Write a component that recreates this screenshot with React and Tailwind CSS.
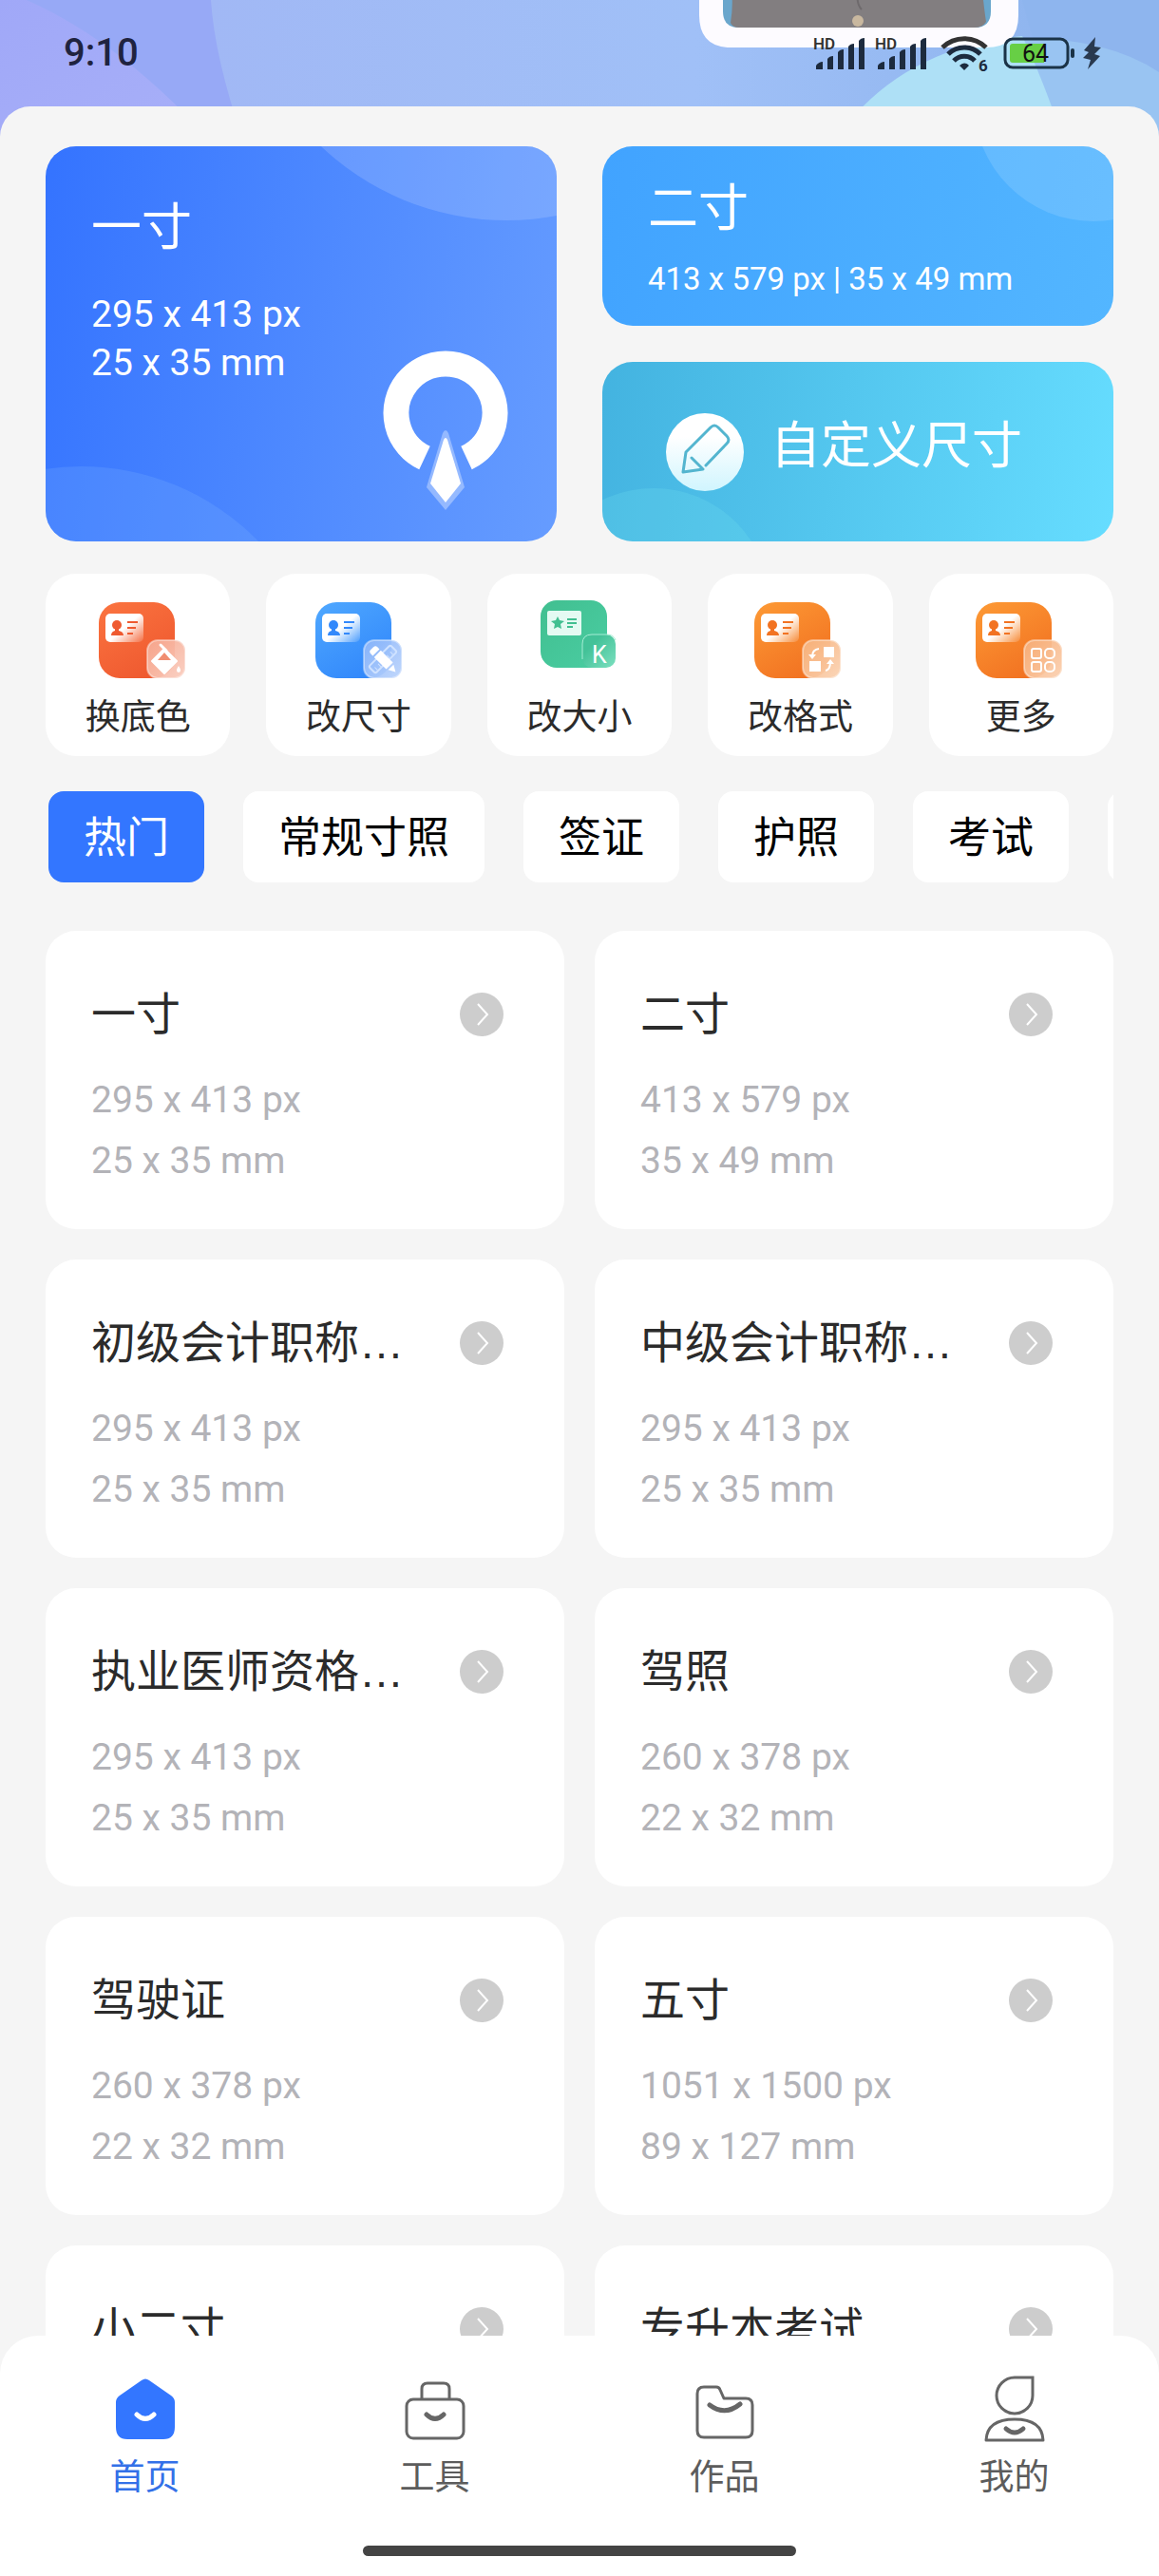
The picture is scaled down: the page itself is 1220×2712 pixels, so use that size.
import React, { useState } from "react";

const tabs = ["热门", "常规寸照", "签证", "护照", "考试"];

const sizes = [
  { name: "一寸", px: "295 x 413 px", mm: "25 x 35 mm" },
  { name: "二寸", px: "413 x 579 px", mm: "35 x 49 mm" },
  { name: "初级会计职称…", px: "295 x 413 px", mm: "25 x 35 mm" },
  { name: "中级会计职称…", px: "295 x 413 px", mm: "25 x 35 mm" },
  { name: "执业医师资格…", px: "295 x 413 px", mm: "25 x 35 mm" },
  { name: "驾照", px: "260 x 378 px", mm: "22 x 32 mm" },
  { name: "驾驶证", px: "260 x 378 px", mm: "22 x 32 mm" },
  { name: "五寸", px: "1051 x 1500 px", mm: "89 x 127 mm" },
  { name: "小二寸", px: "", mm: "" },
  { name: "专升本考试", px: "", mm: "" },
];

/* Status bar */

function Signal() {
  return (
    <svg width="54" height="36" viewBox="0 0 54 36" fill="#1d2b3e" overflow="visible">
      <text x="0" y="14" fontSize="17" fontWeight="600" fontFamily="Roboto, sans-serif" fill="#333">
        HD
      </text>
      <path d="M3 35V31q3-4 7-4v8z" />
      <path d="M15 35V24q2-3 6-3v14z" />
      <path d="M26 35V17q2-3 6-3v21z" />
      <path d="M37 35V11q2-3 6-3v27z" />
      <path d="M48 35V5q2-3 6-3v33z" />
    </svg>
  );
}

function Wifi() {
  return (
    <svg width="50" height="38" viewBox="0 0 50 38" fill="none" stroke="#1d2b3e" strokeWidth="5" overflow="visible">
      <path d="M2 13a33 33 0 0 1 46 0" stroke="#333" />
      <path d="M8 20a24 24 0 0 1 34 0" />
      <path d="M14 27a15 15 0 0 1 22 0" />
      <path d="M20 32q5-5 10 0l-5 5z" fill="#1d2b3e" stroke="none" />
      <text x="40" y="38" fontSize="17" fontWeight="700" fontFamily="Roboto, sans-serif" fill="#1d2b3e" stroke="none">
        6
      </text>
    </svg>
  );
}

function Battery() {
  return (
    <svg width="76" height="36" viewBox="0 0 76 36" fill="none">
      <rect x="2" y="3" width="66" height="30" rx="8" stroke="#1b3347" strokeWidth="3" />
      <path d="M10 8h33v20H10a3 3 0 0 1-3-3V11a3 3 0 0 1 3-3z" fill="#67cf45" />
      <rect x="71" y="13" width="4" height="10" rx="2" fill="#1b3347" />
      <text x="34" y="27" textAnchor="middle" fontSize="25" fontFamily="Roboto, sans-serif" fill="#111">
        64
      </text>
    </svg>
  );
}

function Bolt() {
  return (
    <svg width="20" height="36" viewBox="0 0 20 36" fill="#29394f">
      <path d="M13 1 1 15l5 2-6 6 8 2-3 10L18 21l-6-2 7-7-7-1z" />
    </svg>
  );
}

function HeaderArt() {
  return (
    <svg
      className="absolute inset-x-0 top-0 h-40 w-full"
      viewBox="0 0 1220 160"
      preserveAspectRatio="xMidYMin slice"
    >
      <defs>
        <linearGradient id="sky" x1="0" x2="1">
          <stop offset="0.18" stopColor="#a1b8f5" />
          <stop offset="0.6" stopColor="#a0c0f7" />
          <stop offset="1" stopColor="#8ab2ec" />
        </linearGradient>
        <linearGradient id="violet" x1="0" x2="1" y2="1">
          <stop offset="0" stopColor="#a0a8f8" />
          <stop offset="1" stopColor="#a8b0f8" />
        </linearGradient>
      </defs>
      <rect width="1220" height="160" fill="url(#sky)" />
      <path d="M0 0h222q4 64 38 160H0z" fill="#97a9f6" />
      <path d="M0 0h28q104 46 204 160H0z" fill="url(#violet)" />
      <path d="M1076 0h144v160h-100z" fill="#8eb5ee" />
      <path d="M1076 40q90 0 144 36v84h-144z" fill="#99c4f2" />
      <path d="M870 160q70-110 206-122 20 40 48 122z" fill="#aee0f6" />
      <path d="M736-30h336v46q0 34-34 34H770q-34 0-34-34z" fill="#fdfbff" />
      <path d="M761-10h282v22q0 17-17 17H778q-17 0-17-17z" fill="#6aa6cc" />
      <path d="M770-10h264q2 20 4 33-4 6-12 6H778q-7 0-9-5 3-18 1-34z" fill="#827e80" />
      <path d="M903-10q-2 14 4 20" stroke="#6e6a6c" strokeWidth="2" fill="none" />
      <circle cx="903" cy="22" r="6" fill="#c9b89f" />
    </svg>
  );
}

/* Tool icons */

function IdCard({ color, from, to, id, x, children }) {
  return (
    <svg width="96" height="84" viewBox="0 0 96 84" overflow="visible">
      <defs>
        <linearGradient id={id + "-bg"} x1="0" y1="0" x2="0.6" y2="1">
          <stop offset="0" stopColor={from} />
          <stop offset="1" stopColor={to} />
        </linearGradient>
        <linearGradient id={id + "-card"} x1="0.2" y1="0.2" x2="1" y2="0.9">
          <stop offset="0.4" stopColor="#fff" />
          <stop offset="1" stopColor="#fff" stopOpacity="0.15" />
        </linearGradient>
        <linearGradient id={id + "-badge"} x1="0" y1="0" x2="1" y2="1">
          <stop offset="0" stopColor={color} />
          <stop offset="1" stopColor="#fff" />
        </linearGradient>
      </defs>
      <g transform={"translate(" + x + " 2)"}>
        <rect width="80" height="80" rx="22" fill={"url(#" + id + "-bg)"} />
        <rect x="7" y="12" width="40" height="30" rx="5" fill={"url(#" + id + "-card)"} />
        <g fill={to}>
          <circle cx="19" cy="24" r="5" />
          <path d="M17 27h4v3q5 1 5 5H13q0-4 4-5z" />
          <path d="M30 20h11v2H30zM30 26h9v2h-9zM30 32h6v2h-6z" />
        </g>
        <rect x="51" y="40" width="40" height="40" rx="11" fill={color} fillOpacity="0.9" />
        <rect x="51" y="40" width="40" height="40" rx="11" fill={"url(#" + id + "-badge)"} fillOpacity="0.4" stroke="#fff" strokeOpacity="0.4" strokeWidth="2" />
        {children}
      </g>
    </svg>
  );
}

function BackgroundIcon() {
  return (
    <IdCard id="bgcolor" x={7} color="#f6a890" from="#fb7440" to="#ef5a30">
      <path d="M65 45 71 51" stroke="#fff" strokeWidth="3" strokeLinecap="round" />
      <path d="M69 49 82 62 69 75 56 62z" fill="#fff" stroke="#fff" strokeWidth="2" strokeLinejoin="round" />
      <path d="M69 53 76 61H62z" fill="#f08d70" />
      <path d="M84 67q4 6 0 7-4-1 0-7z" fill="#fff" />
    </IdCard>
  );
}

function ResizeIcon() {
  return (
    <IdCard id="resize" x={2} color="#8bb5fa" from="#4fa8ff" to="#3389fb">
      <g transform="rotate(45 71 60)">
        <rect x="66" y="44" width="10" height="32" rx="2" fill="none" stroke="#cfe2ff" strokeWidth="2" />
        <path d="M71 49h4M71 54h4M71 67h4M71 72h4" stroke="#cfe2ff" strokeWidth="1" />
      </g>
      <g transform="rotate(-45 71 60)">
        <path d="M66 47q0-3 3-3h4q3 0 3 3v3H66zM66 52h10v18H66zM67 72h8l-4 7z" fill="#fff" />
      </g>
    </IdCard>
  );
}

function FileSizeIcon() {
  return (
    <svg width="96" height="84" viewBox="0 0 96 84">
      <defs>
        <linearGradient id="size-bg" x1="0" y1="0" x2="1" y2="1">
          <stop offset="0" stopColor="#41bf90" />
          <stop offset="1" stopColor="#4acda2" />
        </linearGradient>
        <linearGradient id="size-badge" x1="0" y1="0" x2="1" y2="1">
          <stop offset="0.3" stopColor="#43c298" />
          <stop offset="1" stopColor="#7de0c0" />
        </linearGradient>
      </defs>
      <g transform="translate(7 0)">
        <rect width="70" height="71" rx="17" fill="url(#size-bg)" />
        <rect x="7" y="11" width="36" height="26" rx="2" fill="#e4faf2" />
        <path d="m18 17 2 4 5 1-4 3 1 5-4-2-4 2 1-5-4-3 5-1z" fill="#41bf90" />
        <path d="M28 20h10M28 24h10M28 28h6" stroke="#41bf90" strokeWidth="2" />
        <rect x="44" y="36" width="35" height="35" rx="10" fill="url(#size-badge)" />
        <path d="M44 62V46q0-10 10-10h16q7 0 9 6" fill="none" stroke="#a5ecd4" strokeWidth="1" />
        <text x="54" y="66" fontSize="25" fontFamily="Roboto, sans-serif" fill="#fff">
          K
        </text>
      </g>
    </svg>
  );
}

function FormatIcon() {
  return (
    <IdCard id="format" x={0} color="#f7b27c" from="#fd9a35" to="#f27322">
      <path d="M73 47h11v11H73zM58 62h12v11H58z" fill="#fff" />
      <path d="M68 49q-7 1-7 8M75 72q5-1 5-9" fill="none" stroke="#fff" strokeWidth="2" />
      <path d="M57 55h8l-4 5zM76 65h8l-4-5z" fill="#fff" />
    </IdCard>
  );
}

function MoreIcon() {
  return (
    <IdCard id="more" x={0} color="#f7ae78" from="#fd9a35" to="#f27322">
      <g fill="none" stroke="#fff" strokeWidth="2">
        <rect x="59" y="49" width="10" height="10" rx="2" />
        <rect x="73" y="49" width="10" height="10" rx="4" />
        <rect x="59" y="63" width="10" height="10" rx="2" />
        <rect x="73" y="63" width="10" height="10" rx="4" />
      </g>
    </IdCard>
  );
}

const tools = [
  { label: "换底色", icon: <BackgroundIcon /> },
  { label: "改尺寸", icon: <ResizeIcon /> },
  { label: "改大小", icon: <FileSizeIcon /> },
  { label: "改格式", icon: <FormatIcon /> },
  { label: "更多", icon: <MoreIcon /> },
];

/* Bottom navigation icons */

const navItems = [
  {
    label: "首页",
    icon: (
      <svg width="72" height="72" viewBox="0 0 72 72" fill="none">
        <path d="M32 7q4-3 8 0l23 16q4 3 4 7v26q0 13-12 13H17Q5 69 5 56V30q0-4 4-7z" fill="#3376ff" />
        <path d="M27 43q9 9 18 0" stroke="#fff" strokeWidth="5" strokeLinecap="round" />
      </svg>
    ),
  },
  {
    label: "工具",
    icon: (
      <svg width="72" height="72" viewBox="0 0 72 72" fill="none" stroke="#666" strokeWidth="3">
        <rect x="6" y="27" width="60" height="41" rx="7" />
        <path d="M22 27V16q0-6 6-6h17q6 0 6 6v11" />
        <path d="M27 43q9 9 18 0" strokeWidth="5" strokeLinecap="round" />
      </svg>
    ),
  },
  {
    label: "作品",
    icon: (
      <svg width="72" height="72" viewBox="0 0 72 72" fill="none" stroke="#666" strokeWidth="3">
        <path d="M7 21q0-7 7-7h13q3 0 4 3l4 9h23q7 0 7 7v27q0 7-7 7H14q-7 0-7-7z" strokeLinejoin="round" />
        <path d="M20 33q16 12 32-1" strokeWidth="5" strokeLinecap="round" />
      </svg>
    ),
  },
  {
    label: "我的",
    icon: (
      <svg width="72" height="72" viewBox="0 0 72 72" fill="none" stroke="#666" strokeWidth="3">
        <path d="M36 4h19v19a19 19 0 1 1-19-19z" />
        <path d="M6 70q1-22 30-22t30 22z" strokeLinejoin="round" />
        <path d="M27 58q9 8 18 0" strokeWidth="5" strokeLinecap="round" />
      </svg>
    ),
  },
];

function SizeCard({ name, px, mm }) {
  return (
    <a href="#" className="block rounded-[32px] bg-white pt-[58px] pr-16 pb-10 pl-12">
      <div className="mb-7 flex items-center justify-between">
        <h3 className="font-['Liberation_Sans','Noto_Sans_CJK_SC',sans-serif] text-[47px] leading-[60px] whitespace-nowrap text-[#2b2b2b]">
          {name}
        </h3>
        <svg className="shrink-0" width="46" height="46" viewBox="0 0 46 46" fill="none">
          <circle cx="23" cy="23" r="23" fill="#cdcdcd" />
          <path d="m19 12 10 11-10 11" stroke="#fff" strokeWidth="2" />
        </svg>
      </div>
      <p className="min-h-16 text-[39px] leading-[64px] text-[#b3b3b8]">{px}</p>
      <p className="min-h-16 text-[39px] leading-[64px] text-[#b3b3b8]">{mm}</p>
    </a>
  );
}

export default function App() {
  const [tab, setTab] = useState("热门");

  return (
    <div className="relative flex h-screen flex-col overflow-hidden bg-[#f5f5f5] font-[Roboto,'Noto_Sans_CJK_SC',sans-serif]">
      <HeaderArt />

      <header className="relative flex h-28 shrink-0 items-center justify-between pr-[60px] pl-[67px]">
        <span className="text-[40px] leading-[48px] font-medium text-[#1f2340]">9:10</span>
        <div className="flex items-center">
          <Signal />
          <span className="w-[11px]" />
          <Signal />
          <span className="w-[15px]" />
          <Wifi />
          <span className="w-4" />
          <Battery />
          <span className="w-2" />
          <Bolt />
        </div>
      </header>

      <main className="relative min-h-0 flex-1 overflow-y-auto rounded-t-[32px] bg-[#f5f5f5] px-12 pt-[42px] [scrollbar-width:none]">
        {/* Featured sizes */}
        <section className="grid grid-cols-2 gap-x-12 gap-y-[38px] text-white">
          <a href="#" className="relative row-span-2 overflow-hidden rounded-[32px] bg-linear-100 from-[#3473ff] to-[#669cff] px-12 pt-14">
            <svg
              className="absolute inset-0 h-full w-full"
              viewBox="0 0 538 416"
              preserveAspectRatio="xMaxYMid slice"
              fill="none"
            >
              <circle cx="485" cy="-205" r="283" fill="#fff" fillOpacity="0.15" />
              <circle cx="37" cy="598" r="261" fill="#7fb4ff" fillOpacity="0.22" />
              <path d="M399 328A52 52 0 1 1 443 328" stroke="#fff" strokeWidth="27" />
              <path d="M418 302q3-6 6 0l17 57-20 24-20-24z" fill="#fff" fillOpacity="0.35" />
              <path d="M419 309q2-4 4 0l14 46-16 20-16-20z" fill="#fff" />
            </svg>
            <div className="relative">
              <h2 className="mb-9 text-[53px] leading-[60px]">一寸</h2>
              <p className="text-[39px] leading-[51px]">295 x 413 px</p>
              <p className="text-[39px] leading-[51px]">25 x 35 mm</p>
            </div>
          </a>

          <a href="#" className="relative h-[189px] overflow-hidden rounded-[32px] bg-linear-100 from-[#41a3ff] to-[#53b6ff] px-12 pt-9">
            <svg className="absolute inset-0 h-full w-full" viewBox="0 0 538 189" preserveAspectRatio="xMaxYMid slice">
              <circle cx="517" cy="-47" r="126" fill="#fff" fillOpacity="0.13" />
            </svg>
            <div className="relative">
              <h2 className="mb-6 text-[53px] leading-[60px]">二寸</h2>
              <p className="text-[33px] leading-10 whitespace-nowrap">413 x 579 px | 35 x 49 mm</p>
            </div>
          </a>

          <a href="#" className="relative flex h-[189px] items-center overflow-hidden rounded-[32px] bg-linear-100 from-[#43b3e0] to-[#66ddff] px-[67px]">
            <svg className="absolute inset-0 h-full w-full" viewBox="0 0 538 189" preserveAspectRatio="xMinYMid slice">
              <circle cx="54" cy="256" r="123" fill="#6fe0ee" fillOpacity="0.25" />
            </svg>
            <div className="relative flex items-center gap-7">
              <svg width="82" height="82" viewBox="0 0 82 82" fill="none">
                <defs>
                  <linearGradient id="pencil" x1="0" y1="0" x2="0" y2="1">
                    <stop offset="0.3" stopColor="#fff" />
                    <stop offset="1" stopColor="#d0f5fe" />
                  </linearGradient>
                </defs>
                <circle cx="41" cy="41" r="41" fill="url(#pencil)" />
                <path
                  d="M27 47l12 12-21 3 3-21 26-26q4-4 8 0l9 9q4 4 0 8L42 55"
                  stroke="#53b5cf"
                  strokeWidth="3"
                  strokeLinecap="round"
                  strokeLinejoin="round"
                />
              </svg>
              <h2 className="pb-3 text-[53px] leading-[60px] whitespace-nowrap">自定义尺寸</h2>
            </div>
          </a>
        </section>

        {/* Tools */}
        <section className="mt-[34px] grid grid-cols-5 gap-[38px]">
          {tools.map((tool) => (
            <button
              key={tool.label}
              className="flex cursor-pointer flex-col items-center rounded-[32px] bg-white pt-7 pb-[18px]"
            >
              {tool.icon}
              <span className="mt-[18px] text-[37px] leading-[44px] whitespace-nowrap text-[#2b2b2b]">{tool.label}</span>
            </button>
          ))}
        </section>

        {/* Categories */}
        <div className="mt-[37px] flex gap-[41px] overflow-hidden pl-[3px]">
          {tabs.map((name) => (
            <button
              key={name}
              onClick={() => setTab(name)}
              className={
                tab === name
                  ? "h-24 shrink-0 cursor-pointer rounded-2xl bg-[#3376ff] px-[37px] pt-[3px] text-[45px] leading-[60px] text-white"
                  : "h-24 shrink-0 cursor-pointer rounded-2xl bg-white px-[37px] pt-[3px] text-[45px] leading-[60px] text-black"
              }
            >
              {name}
            </button>
          ))}
          <span className="h-24 w-40 shrink-0 rounded-2xl bg-white" />
        </div>

        {/* Size list */}
        <section className="mt-[51px] grid grid-cols-2 gap-8">
          {sizes.map((size) => (
            <SizeCard key={size.name} {...size} />
          ))}
        </section>
      </main>

      <nav className="relative shrink-0 rounded-t-[40px] bg-white pt-10">
        <div className="grid grid-cols-4">
          {navItems.map((item, index) => (
            <a key={item.label} href="#" className="flex flex-col items-center gap-4">
              {item.icon}
              <span
                className={
                  index === 0
                    ? "text-[37px] leading-[44px] text-[#3370e8]"
                    : "text-[37px] leading-[44px] text-[#5c5c5c]"
                }
              >
                {item.label}
              </span>
            </a>
          ))}
        </div>
        <div className="mx-auto mt-[49px] mb-[21px] h-[11px] w-[456px] rounded-full bg-[#444]" />
      </nav>
    </div>
  );
}
